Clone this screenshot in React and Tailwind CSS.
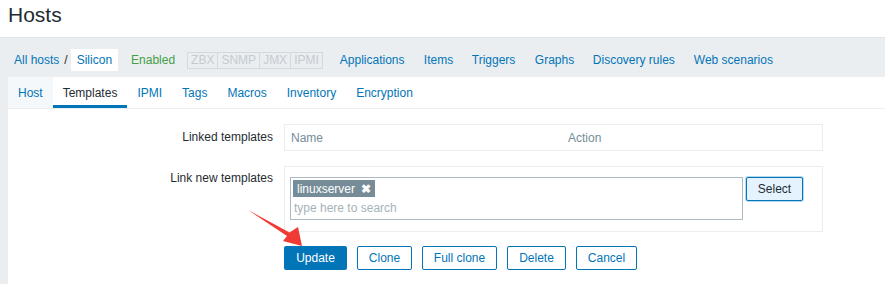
import React from "react";

const navLinks = [
  { t: "Applications", w: "w-[84px]" },
  { t: "Items", w: "w-[48px]" },
  { t: "Triggers", w: "w-[63px]" },
  { t: "Graphs", w: "w-[58px]" },
  { t: "Discovery rules", w: "w-[101px]" },
  { t: "Web scenarios", w: "" },
];
const tabs = ["Host", "Templates", "IPMI", "Tags", "Macros", "Inventory", "Encryption"];
const buttons = [
  { t: "Clone", w: "w-[55px]" },
  { t: "Full clone", w: "w-[75px]" },
  { t: "Delete", w: "w-[59px]" },
  { t: "Cancel", w: "w-[61px]" },
];

export default function App() {
  return (
    <div
      className="relative w-[885px] h-[284px] overflow-hidden bg-[#ebeef1] text-[12px] leading-[14px] text-[#1f2c33]"
      style={{ fontFamily: '"Liberation Sans", Arial, sans-serif' }}
    >
      {/* Header */}
      <div className="h-[38px] bg-white border-b border-[#dfe4e7] pl-[8px] pt-[3px]">
        <h1 className="text-[21px] leading-[24px] font-normal text-[#1f2c33]">Hosts</h1>
      </div>

      {/* Breadcrumb / nav bar */}
      <div className="flex items-center h-[22px] mt-[11px] mb-[6px] pl-[14px]">
        <span className="text-[#0275b8]">All hosts</span>
        <span className="ml-[5px] text-[#1f2c33]">/</span>
        <span className="ml-[3px] bg-white h-[22px] px-[6px] flex items-center text-[#0275b8]">Silicon</span>
        <span className="ml-[13px] text-[#429e47]">Enabled</span>
        <div className="ml-[12px] flex h-[17px]">
          {["ZBX", "SNMP", "JMX", "IPMI"].map((t, i) => (
            <span
              key={t}
              className={`h-[17px] px-[3px] flex items-center border border-[#d3d9dd] text-[#c4cbd0] ${i > 0 ? "border-l-0" : ""}`}
            >
              {t}
            </span>
          ))}
        </div>
        <div className="flex ml-[17px]">
          {navLinks.map((l) => (
            <span key={l.t} className={`${l.w} whitespace-nowrap text-[#0275b8]`}>{l.t}</span>
          ))}
        </div>
      </div>

      {/* Panel */}
      <div className="ml-[8px] bg-white h-[207px]">
        <div className="flex h-[32px] border-b border-[#ebeef1]">
          {tabs.map((t) => {
            const active = t === "Templates";
            const hover = t === "Host";
            return (
              <div
                key={t}
                className={`h-[31px] px-[10px] flex items-center ${active ? "border-b-[3px] border-[#0275b8] text-[#1f2c33] pt-[3px]" : "text-[#0275b8]"} ${hover ? "bg-[#f4f8fb]" : ""}`}
              >
                {t}
              </div>
            );
          })}
        </div>

        {/* Form */}
        <div className="pt-[15px]">
          <div className="flex">
            <div className="w-[265px] text-right pt-[6px]">Linked templates</div>
            <div className="ml-[11px] w-[539px] h-[27px] border border-[#ebeef1] flex items-center text-[#768d99]">
              <span className="w-[277px] pl-[6px]">Name</span>
              <span className="pl-[6px]">Action</span>
            </div>
          </div>

          <div className="flex mt-[15px]">
            <div className="w-[265px] text-right pt-[5px]">Link new templates</div>
            <div className="ml-[11px] w-[539px] h-[66px] border border-[#ebeef1] pt-[10px] pl-[5px] flex items-start">
              <div className="w-[453px] h-[43px] border border-[#acbbc2] p-[2px]">
                <div className="inline-flex items-center h-[17px] bg-[#768d99] text-white pl-[4px] pr-[4px]">
                  <span>linuxserver</span>
                  <span className="ml-[6px] text-[12px] font-bold leading-[12px]">✖</span>
                </div>
                <div className="pl-[1px] mt-[4px] text-[#a6b2b9]">type here to search</div>
              </div>
              <div className="ml-[3px] w-[57px] h-[24px] border border-[#0275b8] rounded-[2px] bg-[#e5f3fe] flex items-center justify-center text-[#1f2c33] shadow-[0_0_0_1px_#b7d9f0]">
                Select
              </div>
            </div>
          </div>

          <div className="flex mt-[14px] ml-[276px] gap-[10px]">
            <div className="w-[63px] h-[24px] flex items-center justify-center rounded-[2px] bg-[#0275b8] text-white">Update</div>
            {buttons.map((b) => (
              <div
                key={b.t}
                className={`${b.w} h-[24px] flex items-center justify-center rounded-[2px] border border-[#0275b8] bg-white text-[#0275b8]`}
              >
                {b.t}
              </div>
            ))}
          </div>
        </div>
      </div>

      {/* Red arrow annotation */}
      <svg className="absolute left-0 top-0 pointer-events-none" width="885" height="284">
        <polygon
          points="248,210 289.5,232.5 298,227 302,246 283,241 287,236"
          fill="#f03a34"
        />
      </svg>
    </div>
  );
}
